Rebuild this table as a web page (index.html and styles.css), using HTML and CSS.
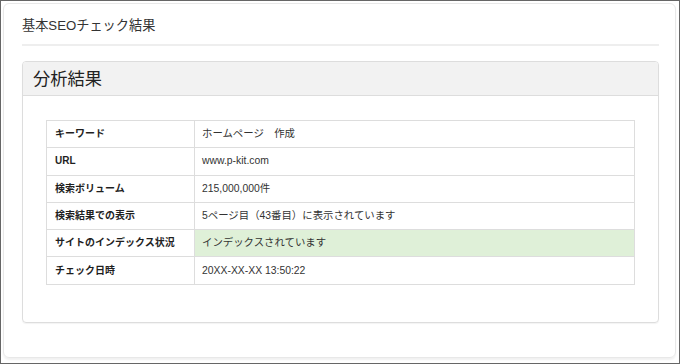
FILE: index.html
```html
<!DOCTYPE html>
<html lang="ja">
<head>
<meta charset="utf-8">
<link rel="stylesheet" href="styles.css">
</head>
<body>
<div class="frame">
  <div class="card">
    <h1 class="page-title">基本SEOチェック結果</h1>
    <div class="rule"></div>
    <div class="panel">
      <div class="panel-heading">分析結果</div>
      <div class="panel-body">
        <table class="result">
          <tr><th>キーワード</th><td>ホームページ　作成</td></tr>
          <tr><th>URL</th><td>www.p-kit.com</td></tr>
          <tr><th>検索ボリューム</th><td>215,000,000件</td></tr>
          <tr><th>検索結果での表示</th><td>5ページ目（43番目）に表示されています</td></tr>
          <tr class="success"><th>サイトのインデックス状況</th><td>インデックスされています</td></tr>
          <tr><th>チェック日時</th><td>20XX-XX-XX 13:50:22</td></tr>
        </table>
      </div>
    </div>
  </div>
</div>
</body>
</html>
```

FILE: styles.css
```css
* { box-sizing: border-box; }
html, body { margin: 0; padding: 0; background: #fff; }
body {
  font-family: "Liberation Sans", "Noto Sans CJK JP", sans-serif;
  color: #333;
}
.frame {
  width: 680px;
  height: 364px;
  border: 1px solid #666666;
  padding: 2px 3px 5px 2px;
  display: flex;
}
.card {
  flex: 1;
  border: 1px solid #e8e8e8;
  border-radius: 6px;
  box-shadow: 0 2px 2px rgba(0,0,0,0.06);
  padding: 0 16px 0 18px;
}
.page-title {
  margin: 12px 0 0 0;
  font-size: 13.2px;
  font-weight: normal;
  line-height: 20px;
  color: #333;
}
.rule {
  margin-top: 8px;
  height: 2px;
  background: #eeeeee;
}
.panel {
  margin-top: 15px;
  border: 1px solid #dddddd;
  border-radius: 4px;
  box-shadow: 0 1px 1px rgba(0,0,0,0.05);
}
.panel-heading {
  background: #f2f2f2;
  border-bottom: 1px solid #dddddd;
  border-radius: 3px 3px 0 0;
  height: 34px;
  padding: 0 10px;
  font-size: 17.3px;
  line-height: 34px;
  color: #222;
}
.panel-body {
  padding: 24px 23px 37px 23px;
}
.result {
  width: 100%;
  border-collapse: collapse;
  font-size: 10.4px;
}
.result th, .result td {
  border: 1px solid #dddddd;
  height: 27.3px;
  padding: 0 7px;
  text-align: left;
  vertical-align: middle;
  line-height: 14px;
}
.result th {
  width: 148px;
  font-size: 10px;
  font-weight: bold;
  color: #1f1f1f;
  padding-left: 8px;
}
.result td { color: #333; }
.result tr.success td { background: #dff0d8; }
```
